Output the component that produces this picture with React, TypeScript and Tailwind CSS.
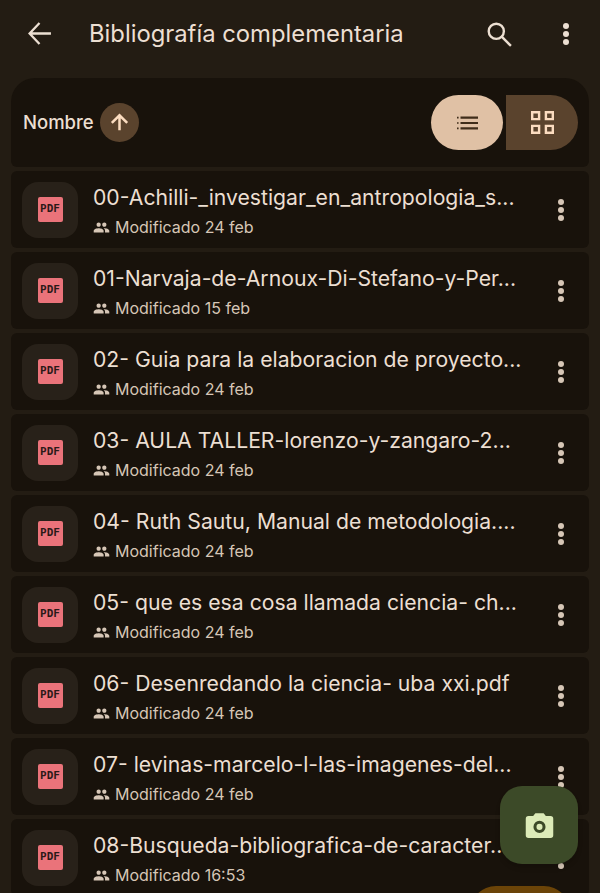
const files = [
  { name: "00-Achilli-_investigar_en_antropologia_s...", date: "24 feb" },
  { name: "01-Narvaja-de-Arnoux-Di-Stefano-y-Per...", date: "15 feb" },
  { name: "02- Guia para la elaboracion de proyecto...", date: "24 feb" },
  { name: "03- AULA TALLER-lorenzo-y-zangaro-2...", date: "24 feb" },
  { name: "04- Ruth Sautu, Manual de metodologia....", date: "24 feb" },
  { name: "05- que es esa cosa llamada ciencia- ch...", date: "24 feb" },
  { name: "06- Desenredando la ciencia- uba xxi.pdf", date: "24 feb" },
  { name: "07- levinas-marcelo-l-las-imagenes-del...", date: "24 feb" },
  { name: "08-Busqueda-bibliografica-de-caracter...", date: "16:53" },
];

function Dots({ className }: { className: string }) {
  return (
    <div className={`flex flex-col items-center gap-[2px] ${className}`}>
      <span className="w-[6px] h-[6px] rounded-full bg-current" />
      <span className="w-[6px] h-[6px] rounded-full bg-current" />
      <span className="w-[6px] h-[6px] rounded-full bg-current" />
    </div>
  );
}

function PeopleIcon() {
  return (
    <svg width="17" height="17" viewBox="0 0 24 24" fill="#d6c6b6">
      <path d="M16 11c1.66 0 2.99-1.34 2.99-3S17.66 5 16 5s-3 1.34-3 3 1.34 3 3 3zm-8 0c1.66 0 2.99-1.34 2.99-3S9.66 5 8 5 5 6.34 5 8s1.34 3 3 3zm0 2c-2.33 0-7 1.17-7 3.5V19h14v-2.5C15 14.17 10.33 13 8 13zm8 0c-.29 0-.62.02-.97.05 1.16.84 1.97 1.97 1.97 3.45V19h6v-2.5c0-2.33-4.67-3.5-7-3.5z" />
    </svg>
  );
}

function FileRow({ name, date }: { name: string; date: string }) {
  return (
    <div className="h-[77px] shrink-0 bg-[#18120b] rounded-[6px] flex items-center pl-[11px] pr-[25px]">
      <div className="w-[56px] h-[56px] shrink-0 rounded-[16px] bg-[#282119] flex items-center justify-center">
        <div className="w-[25px] h-[25px] rounded-[2px] bg-[#ea737a] flex items-center justify-center text-[#2a1a18] text-[11px] font-bold font-['DejaVu_Sans_Mono',monospace]">
          PDF
        </div>
      </div>
      <div className="flex-1 min-w-0 ml-[15px] pt-[2px]">
        <div className="text-[21.2px] leading-[28px] text-[#ecdfd2] whitespace-nowrap">{name}</div>
        <div className="flex items-center mt-[5px] text-[16px] leading-[22px] text-[#d6c6b6]">
          <PeopleIcon />
          <span className="ml-[5px]">Modificado {date}</span>
        </div>
      </div>
      <Dots className="text-[#d6c6b6] shrink-0" />
    </div>
  );
}

export default function App() {
  return (
    <div className="relative h-[893px] w-[600px] overflow-hidden bg-[#231c13] font-['Inter',sans-serif]">
      {/* top bar */}
      <div className="h-[78px] flex items-center pl-[27px] pr-[31px] pb-[11px]">
        <svg width="25" height="25" viewBox="0 0 24 24" fill="none" stroke="#ecdfd2" strokeWidth="2.2">
          <path d="M23 12H2.5M12 2 2.5 12 12 22" />
        </svg>
        <div className="ml-[37px] flex-1 text-[23.8px] text-[#ecdfd2]">Bibliografía complementaria</div>
        <svg width="26" height="26" viewBox="0 0 24 24" fill="none" stroke="#ecdfd2" strokeWidth="2.2">
          <circle cx="9.5" cy="9.5" r="7" />
          <path d="m14.5 14.5 8.5 8.5" />
        </svg>
        <Dots className="text-[#ecdfd2] ml-[51px]" />
      </div>

      {/* list */}
      <div className="flex flex-col gap-[4px] px-[11px]">
        <div className="h-[89px] shrink-0 bg-[#18120b] rounded-t-[24px] rounded-b-[6px] flex items-center pl-[12px] pr-[11px]">
          <span className="text-[18.5px] pt-[1px] font-medium text-[#ecdfd2]">Nombre</span>
          <div className="ml-[6px] w-[39px] h-[39px] rounded-full bg-[#5a432d] flex items-center justify-center">
            <svg width="23" height="23" viewBox="0 0 24 24" fill="none" stroke="#fbdcc0" strokeWidth="2.6">
              <path d="M12 20V4.5M4 12.5l8-8 8 8" />
            </svg>
          </div>
          <div className="ml-auto flex gap-[3px]">
            <div className="w-[72px] h-[55px] rounded-full bg-[#e0c1a5] flex items-center justify-center">
              <svg width="21" height="14" viewBox="0 0 21 14" fill="#3f2d1a">
                <path d="M0 .8h1.6v1.6H0zM0 6.2h1.6v1.6H0zM0 11.6h1.6v1.6H0zM3.5 .5H21v2.2H3.5zM3.5 5.9H21v2.2H3.5zM3.5 11.3H21v2.2H3.5z" />
              </svg>
            </div>
            <div className="w-[72px] h-[55px] rounded-l-[12px] rounded-r-full bg-[#5a432d] flex items-center justify-center">
              <svg width="23" height="23" viewBox="0 0 23 23" fill="none" stroke="#fbdcc0" strokeWidth="2.4">
                <path d="M1.2 1.2h6.9v6.9H1.2zM14.9 1.2h6.9v6.9h-6.9zM1.2 14.9h6.9v6.9H1.2zM14.9 14.9h6.9v6.9h-6.9z" />
              </svg>
            </div>
          </div>
        </div>
        {files.map((file) => (
          <FileRow key={file.name} name={file.name} date={file.date} />
        ))}
      </div>

      {/* camera button */}
      <div className="absolute left-[500px] top-[786px] w-[78px] h-[78px] rounded-[22px] bg-[#3c4a28] flex items-center justify-center shadow-md">
        <svg width="33" height="33" viewBox="0 0 24 24" fill="#dcebb8">
          <path
            fillRule="evenodd"
            d="M9 3 7.4 5H4a2 2 0 0 0-2 2v12a2 2 0 0 0 2 2h16a2 2 0 0 0 2-2V7a2 2 0 0 0-2-2h-3.4L15 3H9zm3 14.4a4.4 4.4 0 1 1 0-8.8 4.4 4.4 0 0 1 0 8.8zm0-2.2a2.2 2.2 0 1 0 0-4.4 2.2 2.2 0 0 0 0 4.4z"
          />
        </svg>
      </div>

      {/* button below the fold */}
      <div className="absolute left-[470px] top-[886px] w-[100px] h-[60px] rounded-[26px] bg-[#6b4408]" />
    </div>
  );
}
